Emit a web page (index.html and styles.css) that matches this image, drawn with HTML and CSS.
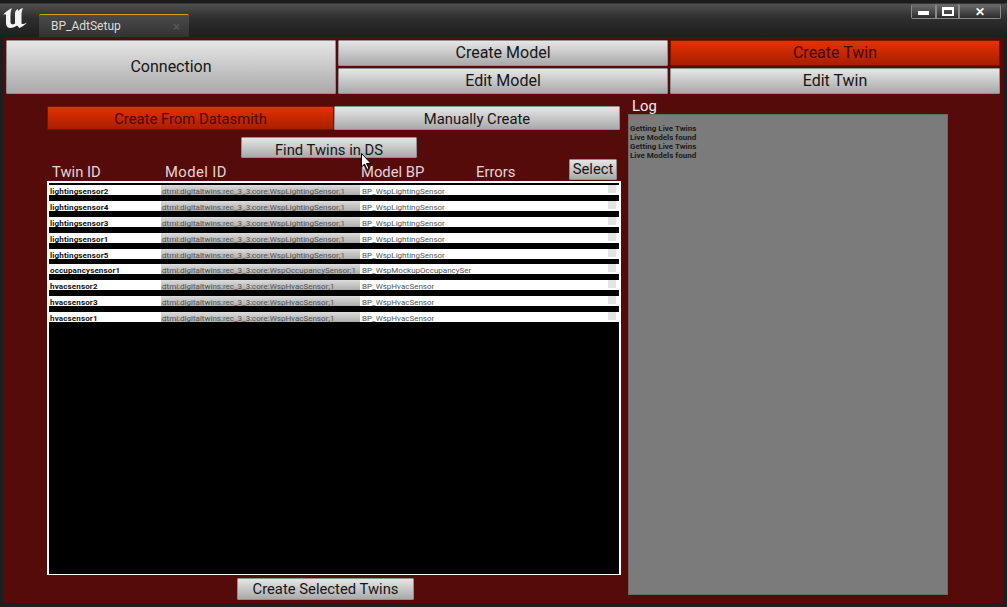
FILE: index.html
```html
<!DOCTYPE html>
<html lang="en">
<head>
  <meta charset="UTF-8">
  <title>BP_AdtSetup</title>
  <link rel="stylesheet" href="styles.css">
</head>
<body>
  <div class="window">
    <div class="titlebar">
      <svg class="logo" viewBox="0 0 24 22" width="24" height="22">
        <path fill="#f4f4f4" d="M0 8 C2 5 5 3 9 1 C8 3 7.500 5 7.500 8 L7.500 15 C7.500 17.500 10 18 12 16.500 L12 7 C12 4 13 3 15 2 L15 4 C16 3 18 1.500 20 1 C19 3 18.500 5 18.500 8 L18.500 16 C18.500 17.500 20 17.500 24 15.500 C22 18 19 20 16.500 21 L14 18.500 C12 20 9.500 21 7.500 21 C4.500 21 3 19 3 16 L3 8.500 C3 7 1.500 7 0 8 Z"/>
      </svg>
      <div class="tab">
        <span>BP_AdtSetup</span>
        <span class="tab-close">×</span>
      </div>
      <div class="win-buttons">
        <div class="win-btn win-min"><i></i></div>
        <div class="win-btn win-max"><i></i></div>
        <div class="win-btn win-close">✕</div>
      </div>
    </div>

    <div class="panel">
      <div class="nav">
        <button class="btn connection">Connection</button>
        <button class="btn">Create Model</button>
        <button class="btn active">Create Twin</button>
        <button class="btn">Edit Model</button>
        <button class="btn">Edit Twin</button>
      </div>

      <div class="content">
        <div class="main">
          <div class="tabs">
            <button class="btn active">Create From Datasmith</button>
            <button class="btn">Manually Create</button>
          </div>
          <button class="btn find">Find Twins in DS</button>
          <div class="columns">
            <span>Twin ID</span>
            <span class="wide">Model ID</span>
            <span>Model BP</span>
            <span>Errors</span>
            <button class="btn select">Select</button>
          </div>
          <div class="list">
            <div class="row"><b>lightingsensor2</b><span class="model">dtmi:digitaltwins:rec_3_3:core:WspLightingSensor;1</span><span class="bp">BP_WspLightingSensor</span><i class="check"></i></div>
            <div class="row"><b>lightingsensor4</b><span class="model">dtmi:digitaltwins:rec_3_3:core:WspLightingSensor;1</span><span class="bp">BP_WspLightingSensor</span><i class="check"></i></div>
            <div class="row"><b>lightingsensor3</b><span class="model">dtmi:digitaltwins:rec_3_3:core:WspLightingSensor;1</span><span class="bp">BP_WspLightingSensor</span><i class="check"></i></div>
            <div class="row"><b>lightingsensor1</b><span class="model">dtmi:digitaltwins:rec_3_3:core:WspLightingSensor;1</span><span class="bp">BP_WspLightingSensor</span><i class="check"></i></div>
            <div class="row"><b>lightingsensor5</b><span class="model">dtmi:digitaltwins:rec_3_3:core:WspLightingSensor;1</span><span class="bp">BP_WspLightingSensor</span><i class="check"></i></div>
            <div class="row"><b>occupancysensor1</b><span class="model">dtmi:digitaltwins:rec_3_3:core:WspOccupancySensor;1</span><span class="bp">BP_WspMockupOccupancySer</span><i class="check"></i></div>
            <div class="row"><b>hvacsensor2</b><span class="model">dtmi:digitaltwins:rec_3_3:core:WspHvacSensor;1</span><span class="bp">BP_WspHvacSensor</span><i class="check"></i></div>
            <div class="row"><b>hvacsensor3</b><span class="model">dtmi:digitaltwins:rec_3_3:core:WspHvacSensor;1</span><span class="bp">BP_WspHvacSensor</span><i class="check"></i></div>
            <div class="row"><b>hvacsensor1</b><span class="model">dtmi:digitaltwins:rec_3_3:core:WspHvacSensor;1</span><span class="bp">BP_WspHvacSensor</span><i class="check"></i></div>
          </div>
          <button class="btn create-selected">Create Selected Twins</button>
        </div>

        <div class="log">
          <div class="log-label">Log</div>
          <div class="log-box">
            <div>Getting Live Twins</div>
            <div>Live Models found</div>
            <div>Getting Live Twins</div>
            <div>Live Models found</div>
          </div>
        </div>
      </div>
    </div>

    <svg class="cursor" viewBox="0 0 12 18" width="12" height="18">
      <path fill="#fff" stroke="#000" stroke-width="1" d="M0.500 0.500 L0.500 14 L3.500 11 L6 16.500 L8 15.500 L5.500 10.500 L10 10.500 Z"/>
    </svg>
  </div>
</body>
</html>
```

FILE: styles.css
```css
* {
  box-sizing: border-box;
}

body {
  margin: 0;
  font-family: Roboto, "Liberation Sans", sans-serif;
  background-color: #1e1e1e;
}

.window {
  position: relative;
  width: 1007px;
  height: 607px;
  padding: 0 4px 4px 3px;
  overflow: hidden;
  background-color: #1e1e1e;
}

/* title bar */
.titlebar {
  display: flex;
  height: 37px;
  margin: 0 -4px 0 -3px;
  padding: 4px 6px 0 3px;
  background: linear-gradient(#1c1c1c 0, #1c1c1c 3px, #505050 4px, #2e2e2e 18px, #1e1e1e 37px);
}

.logo {
  flex: none;
  margin-top: 3px;
}

.tab {
  display: flex;
  justify-content: space-between;
  align-items: center;
  width: 150px;
  height: 23px;
  margin: 10px 0 0 12px;
  padding: 0 9px 0 12px;
  border-top: 1px solid #c8a818;
  border-radius: 2px 2px 0 0;
  background: linear-gradient(#4a4a4a, #333);
  color: #ddd;
  font-size: 12px;
}

.tab-close {
  color: #5c5c5c;
  font-size: 13px;
}

.win-buttons {
  display: flex;
  margin-left: auto;
  height: 15px;
}

.win-btn {
  display: flex;
  justify-content: center;
  align-items: center;
  height: 15px;
  border: 1px solid #8a8a8a;
  border-top-color: #666;
  background: linear-gradient(#6a6a6a, #2c2c2c);
  color: #fff;
  font-size: 12px;
  font-weight: bold;
}

.win-min {
  width: 25px;
  border-radius: 2px 0 0 2px;
}

.win-min i {
  width: 11px;
  height: 4px;
  margin-top: 3px;
  background-color: #fff;
}

.win-max {
  width: 23px;
}

.win-max i {
  width: 12px;
  height: 9px;
  border: 2px solid #fff;
  border-top-width: 3px;
}

.win-close {
  width: 42px;
  border-radius: 0 2px 2px 0;
}

/* main panel */
.panel {
  height: 566px;
  padding: 3px;
  background-color: #560b0b;
}

.btn {
  padding: 0;
  border: 1px solid #8f8f8f;
  border-radius: 1px;
  background: linear-gradient(#e6e6e6, #a9a9a9);
  color: #161616;
  font-family: inherit;
  font-size: 16px;
  white-space: nowrap;
}

.btn.active {
  border-color: #7a1400;
  background: linear-gradient(#e53200, #a81e00);
  color: #4a0500;
}

.nav {
  display: grid;
  grid-template-columns: 330px 330px 330px;
  grid-template-rows: 26px 26px;
  gap: 2px;
}

.nav .btn {
  padding-bottom: 2px;
}

.connection {
  grid-row: span 2;
}

.content {
  display: flex;
  margin-top: 12px;
}

.main {
  width: 574px;
  margin-left: 41px;
}

.tabs {
  display: grid;
  grid-template-columns: 287px 286px;
  height: 24px;
}

.tabs .btn {
  padding-top: 2px;
  font-size: 14.800px;
}

.find {
  display: block;
  width: 176px;
  height: 21px;
  margin: 7px 0 0 194px;
  padding-top: 3px;
  font-size: 14.800px;
}

.columns {
  display: grid;
  grid-template-columns: 113px 196px 115px 93px 48px;
  align-items: center;
  height: 23px;
  padding-left: 5px;
  color: #e2d6d6;
  font-size: 14.800px;
}

.columns span {
  padding-top: 5px;
}

.columns .wide {
  letter-spacing: 0.400px;
}

.select {
  height: 21px;
  padding-bottom: 2px;
  font-size: 14.800px;
}

.list {
  display: flex;
  flex-direction: column;
  gap: 5.900px;
  height: 394px;
  padding: 2px 0;
  border: 2px solid #fff;
  border-bottom-width: 1px;
  background-color: #000;
}

.row {
  display: grid;
  grid-template-columns: 112px 199px 248px 8px;
  flex: none;
  height: 10px;
  overflow: hidden;
  background-color: #fff;
  color: #111;
  font-size: 8px;
  line-height: 10px;
  white-space: nowrap;
}

.row b {
  padding: 2px 0 0 1px;
  letter-spacing: 0.150px;
}

.model {
  overflow: hidden;
  padding: 2px 0 0 1px;
  background: linear-gradient(#dcdcdc, #a4a4a4);
  color: #555;
}

.bp {
  padding: 2px 0 0 2px;
  color: #555;
}

.check {
  display: block;
  height: 8px;
  background-color: #e4e4e4;
}

.create-selected {
  display: block;
  width: 177px;
  height: 22px;
  margin: 3px 0 0 190px;
  font-size: 14.800px;
}

/* log */
.log {
  width: 320px;
  margin-left: 7px;
}

.log-label {
  height: 8px;
  padding-left: 4px;
  color: #eee;
  font-size: 14.800px;
  line-height: 0;
}

.log-box {
  height: 481px;
  padding: 9px 1px;
  border: 1px solid #6a6a6a;
  background-color: #7b7b7b;
  color: #1c1c1c;
  font-size: 8px;
  font-weight: bold;
  line-height: 9px;
}

.cursor {
  position: absolute;
  left: 361px;
  top: 153px;
}
```
